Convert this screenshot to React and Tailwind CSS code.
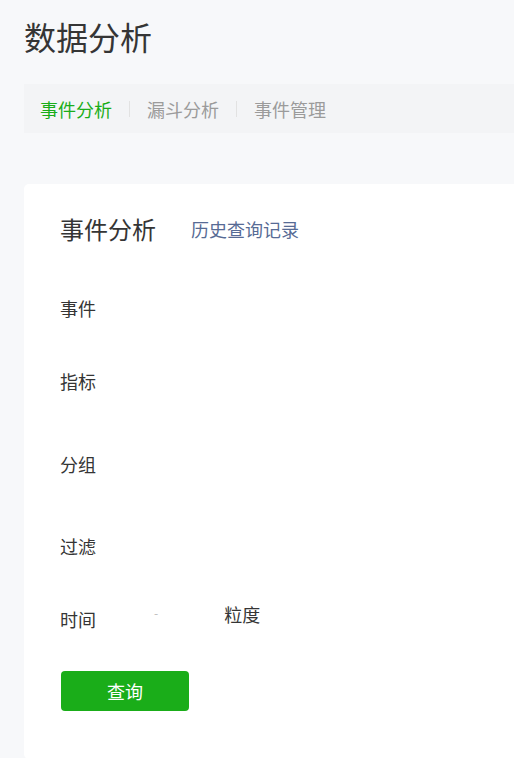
import { useState } from 'react'

const tabs = ['事件分析', '漏斗分析', '事件管理']

function Tabs() {
  const [active, setActive] = useState(0)
  return (
    <div className="flex items-center h-[49px] pl-4 bg-[#f3f4f6]">
      {tabs.map((t, i) => (
        <div key={t} className="flex items-center">
          {i > 0 && <span className="w-px h-4 mx-[17px] bg-[#e2e2e2]" />}
          <button
            onClick={() => setActive(i)}
            className={`text-[18px] leading-6 ${active === i ? 'text-[#1aad19]' : 'text-[#9b9b9b]'}`}
          >
            {t}
          </button>
        </div>
      ))}
    </div>
  )
}

function Row({ label, className, children }) {
  return (
    <div className={`flex items-start ${className}`}>
      <span className="text-[18px] leading-6 text-[#353535]">{label}</span>
      {children}
    </div>
  )
}

export default function App() {
  return (
    <div
      className="min-h-screen bg-[#f7f8fa] overflow-hidden"
      style={{ fontFamily: '"Noto Sans CJK SC", "Noto Sans", sans-serif' }}
    >
      <div className="w-[600px] pl-6 pt-4">
        <h1 className="text-[32px] leading-[40px] text-[#353535] font-normal">数据分析</h1>
        <div className="mt-7">
          <Tabs />
        </div>

        <div className="mt-[51px] bg-white rounded-[5px] pl-9 pt-[29px] pb-12">
          <div className="flex items-center h-8">
            <span className="text-[24px] leading-8 text-[#353535]">事件分析</span>
            <a className="ml-[35px] text-[18px] leading-6 text-[#576b95] cursor-pointer">历史查询记录</a>
          </div>

          <div className="mt-[51px] flex flex-col">
            <Row label="事件" className="h-[73px]" />
            <Row label="指标" className="h-[83px]" />
            <Row label="分组" className="h-[82px]" />
            <Row label="过滤" className="h-[68px]" />
            <div className="flex items-start h-[69px]">
              <span className="mt-[5px] text-[18px] leading-6 text-[#353535]">时间</span>
              <span className="ml-[58px] mt-[3px] text-[12px] leading-4 text-[#bbbbbb]">-</span>
              <span className="ml-[66px] text-[18px] leading-6 text-[#353535]">粒度</span>
            </div>
          </div>

          <button className="ml-px w-32 h-10 rounded-[4px] bg-[#1aad19] text-white text-[18px] leading-6">
            查询
          </button>
        </div>
      </div>
    </div>
  )
}
